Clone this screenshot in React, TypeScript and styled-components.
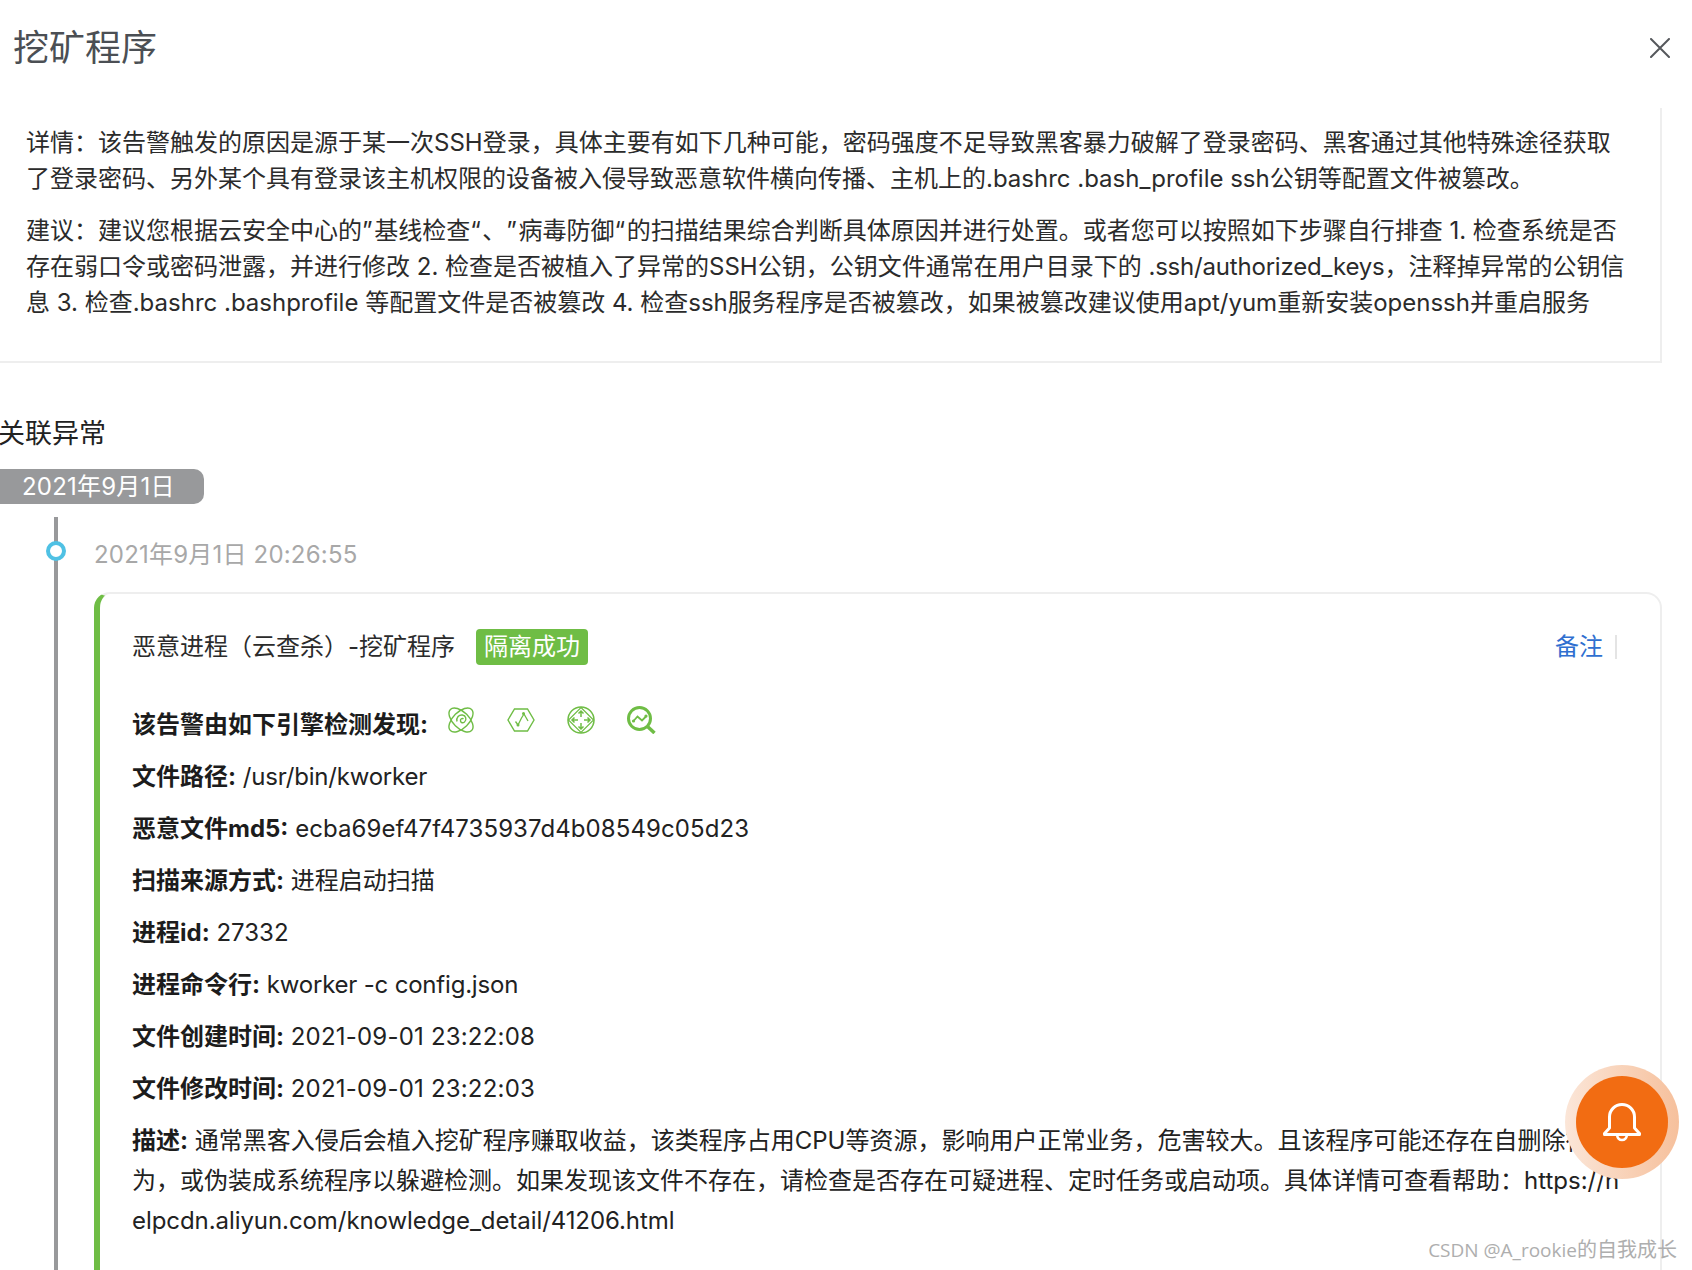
import React from "react";
import styled, { createGlobalStyle } from "styled-components";

const Global = createGlobalStyle`
  html, body { margin: 0; padding: 0; background: #fff; }
  body { font-family: "Inter", "Noto Sans CJK SC", sans-serif; }
`;

const Page = styled.div`
  position: relative;
  width: 1692px;
  height: 1270px;
  overflow: hidden;
  background: #fff;
  font-family: "Inter", "Noto Sans CJK SC", sans-serif;
  font-size: 24px;
  line-height: 36px;
  color: #222;
  text-spacing-trim: space-all;
`;

const Header = styled.header`
  display: flex;
  align-items: center;
  justify-content: space-between;
  height: 96px;
  padding: 0 22px 0 13px;
  margin-bottom: 12px;
`;

const Title = styled.h1`
  margin: 0;
  font-size: 36px;
  line-height: 44px;
  font-weight: 400;
  color: #4b4f54;
`;

const CloseButton = styled.button`
  display: flex;
  width: 20px;
  height: 20px;
  padding: 0;
  border: 0;
  background: none;
  color: #55585c;
`;

const DetailPanel = styled.section`
  width: 1662px;
  box-sizing: border-box;
  padding: 17px 27px 40px 26px;
  border-right: 2px solid #eeeeee;
  border-bottom: 2px solid #eeeeee;
`;

const Paragraph = styled.p`
  margin: 0 0 16px;
  color: #2b2b2b;
  white-space: nowrap;
  &:last-child { margin-bottom: 0; }
`;

const Spaced = styled.span<{ $spacing: number }>`
  letter-spacing: ${(p) => p.$spacing}px;
`;

const SectionTitle = styled.h2`
  margin: 51px 0 15px -2px;
  font-size: 27px;
  line-height: 40px;
  font-weight: 400;
  color: #222;
`;

const DatePill = styled.div`
  box-sizing: border-box;
  width: 204px;
  height: 35px;
  padding-left: 22px;
  line-height: 36px;
  color: #fff;
  background: #98999b;
  border-radius: 0 10px 10px 0;
`;

const Timeline = styled.div`
  position: relative;
  margin: 13px 0 0 54px;
  padding: 20px 0 0 36px;
  border-left: 4px solid #98999b;
  width: 1568px;
`;

const Dot = styled.span`
  position: absolute;
  left: -12px;
  top: 24px;
  box-sizing: border-box;
  width: 20px;
  height: 20px;
  border: 4px solid #4fc1e4;
  border-radius: 50%;
  background: #fff;
`;

const Time = styled.div`
  color: #a8a8a8;
  margin-bottom: 19px;
`;

const Card = styled.article`
  box-sizing: border-box;
  height: 760px;
  padding: 35px 43px 0 32px;
  border: 2px solid #eeeeee;
  border-left: 6px solid #6fbd45;
  border-radius: 16px;
`;

const CardHead = styled.div`
  display: flex;
  align-items: center;
  height: 36px;
  margin-bottom: 42px;
`;

const CardName = styled.span`
  color: #2b2b2b;
`;

const Tag = styled.span`
  margin-left: 21px;
  padding: 0 8px;
  height: 36px;
  border-radius: 4px;
  color: #fff;
  background: #6fbd45;
`;

const Remark = styled.a`
  margin-left: auto;
  padding-right: 12px;
  border-right: 2px solid #e4e4e4;
  height: 24px;
  line-height: 24px;
  color: #2f6fd0;
`;

const Row = styled.div`
  margin-bottom: 16px;
  color: #222;
  white-space: nowrap;
`;

const EngineRow = styled(Row)`
  display: flex;
  align-items: center;
`;

const Label = styled.b`
  font-weight: 700;
  color: #1c1c1c;
`;

const Engines = styled.span`
  display: flex;
  gap: 32px;
  margin: -10px 0 0 19px;
  color: #6fbd45;
`;

const Description = styled.div`
  line-height: 40px;
  margin-top: -2px;
  color: #222;
  white-space: nowrap;
`;

const BellHalo = styled.div`
  position: absolute;
  left: 1565px;
  top: 1065px;
  box-sizing: border-box;
  width: 114px;
  height: 114px;
  padding: 11px;
  border-radius: 50%;
  background: linear-gradient(90deg, #fbe6d8, #f6c09c);
`;

const Bell = styled.button`
  width: 92px;
  height: 92px;
  padding: 0;
  border: 0;
  border-radius: 50%;
  background: #f26c12;
  color: #fff;
  display: flex;
  align-items: center;
  justify-content: center;
`;

const Watermark = styled.div`
  position: absolute;
  right: 15px;
  bottom: 6px;
  font-size: 20px;
  line-height: 28px;
  font-family: "Open Sans", "Noto Sans CJK SC", sans-serif;
  color: #aeaeae;
`;

const WatermarkLatin = styled.span`
  font-size: 19px;
`;

const CloseIcon = () => (
  <svg width="20" height="20" viewBox="0 0 20 20" fill="none" stroke="currentColor" strokeWidth="2" strokeLinecap="round">
    <path d="M1 1 L19 19 M19 1 L1 19" />
  </svg>
);

const OrbitIcon = () => (
  <svg width="28" height="28" viewBox="0 0 28 28" fill="none" stroke="currentColor" strokeWidth="1.4">
    <ellipse cx="14" cy="14" rx="15" ry="8" transform="rotate(45 14 14)" />
    <ellipse cx="14" cy="14" rx="15" ry="8" transform="rotate(-45 14 14)" />
    <path d="M10 15.500c-1-4 2-7 5.500-6.500 3.500.5 4.500 5 2 7-2 1.500-4.500.5-4-2 .3-1.500 2-2 3-1" />
  </svg>
);

const HexIcon = () => (
  <svg width="28" height="28" viewBox="0 0 28 28" fill="none" stroke="currentColor" strokeWidth="1.4">
    <path d="M7.500 3h13L27 14l-6.500 11h-13L1 14z" />
    <path d="M8.500 15.500l2.500 3.500 3.500-7 2.500-4 4 7" strokeWidth="1.300" />
    <circle cx="11" cy="19" r="1.500" fill="currentColor" stroke="none" />
    <circle cx="16.500" cy="7.500" r="1.500" fill="currentColor" stroke="none" />
  </svg>
);

const RadarIcon = () => (
  <svg width="28" height="28" viewBox="0 0 28 28" fill="none" stroke="currentColor" strokeWidth="1.500">
    <circle cx="14" cy="14" r="13" />
    <path d="M14 1.500L26.500 14 14 26.500 1.500 14z" strokeWidth="1.200" />
    <path d="M14 5v6M11.500 7.500L14 5l2.500 2.500M14 23v-6M11.500 20.500L14 23l2.500-2.500M5 14h6M7.500 11.500L5 14l2.500 2.500M23 14h-6M20.500 11.500L23 14l-2.500 2.500" />
  </svg>
);

const SearchChartIcon = () => (
  <svg width="29" height="28" viewBox="0 0 29 28" fill="none" stroke="currentColor">
    <circle cx="12.500" cy="12.500" r="11" strokeWidth="3" />
    <path d="M20.500 20.500L27.500 27" strokeWidth="3.500" />
    <path d="M6.500 15l4-4.500 4.500 4 4.500-4.500" strokeWidth="1.800" />
    <circle cx="6.500" cy="15" r="1.600" fill="currentColor" stroke="none" />
    <circle cx="19" cy="10" r="1.600" fill="currentColor" stroke="none" />
  </svg>
);

const BellIcon = () => (
  <svg width="40" height="40" viewBox="0 0 40 40" fill="none" stroke="currentColor" strokeWidth="3" strokeLinejoin="round" strokeLinecap="round">
    <path d="M7.500 26V15a12.500 12.500 0 0 1 25 0v11l5 5.500v1H2.500v-1z" />
    <path d="M15 33c.500 3 2.500 5 5 5s4.500-2 5-5" strokeWidth="2.500" />
  </svg>
);

const rows: [string, React.ReactNode][] = [
  ["文件路径:", <Spaced $spacing={-0.2}>/usr/bin/kworker</Spaced>],
  ["恶意文件md5:", <Spaced $spacing={0.08}>ecba69ef47f4735937d4b08549c05d23</Spaced>],
  ["扫描来源方式:", "进程启动扫描"],
  ["进程id:", "27332"],
  ["进程命令行:", <Spaced $spacing={-0.2}>kworker -c config.json</Spaced>],
  ["文件创建时间:", <Spaced $spacing={0.2}>2021-09-01 23:22:08</Spaced>],
  ["文件修改时间:", <Spaced $spacing={0.2}>2021-09-01 23:22:03</Spaced>],
];

export default function App() {
  return (
    <Page>
      <Global />
      <Header>
        <Title>挖矿程序</Title>
        <CloseButton aria-label="关闭"><CloseIcon /></CloseButton>
      </Header>
      <DetailPanel>
        <Paragraph>
          详情：该告警触发的原因是源于某一次SSH登录，具体主要有如下几种可能，密码强度不足导致黑客暴力破解了登录密码、黑客通过其他特殊途径获取<br />
          了登录密码、另外某个具有登录该主机权限的设备被入侵导致恶意软件横向传播、主机上的.bashrc .bash_profile ssh公钥等配置文件被篡改。
        </Paragraph>
        <Paragraph>
          建议：建议您根据云安全中心的<Spaced $spacing={1.6}>”</Spaced>基线检查<Spaced $spacing={1.6}>“</Spaced>、<Spaced $spacing={1.6}>”</Spaced>病毒防御<Spaced $spacing={1.6}>“</Spaced>的扫描结果综合判断具体原因并进行处置。或者您可以按照如下步骤自行排查 1. 检查系统是否<br />
          存在弱口令或密码泄露，并进行修改 2. 检查是否被植入了异常的SSH公钥，公钥文件通常在用户目录下的 <Spaced $spacing={-0.2}>.ssh/authorized_keys</Spaced>，注释掉异常的公钥信<br />
          息 3. 检查.bashrc .bashprofile 等配置文件是否被篡改 4. 检查ssh服务程序是否被篡改，如果被篡改建议使用apt/yum重新安装openssh并重启服务
        </Paragraph>
      </DetailPanel>
      <SectionTitle>关联异常</SectionTitle>
      <DatePill><Spaced $spacing={0.2}>2021年9月1日</Spaced></DatePill>
      <Timeline>
        <Dot />
        <Time><Spaced $spacing={0.2}>2021年9月1日 20:26:55</Spaced></Time>
        <Card>
          <CardHead>
            <CardName>恶意进程（云查杀）-挖矿程序</CardName>
            <Tag>隔离成功</Tag>
            <Remark>备注</Remark>
          </CardHead>
          <EngineRow>
            <Label>该告警由如下引擎检测发现:</Label>
            <Engines>
              <OrbitIcon />
              <HexIcon />
              <RadarIcon />
              <SearchChartIcon />
            </Engines>
          </EngineRow>
          {rows.map(([label, value]) => (
            <Row key={label}>
              <Label>{label}</Label> {value}
            </Row>
          ))}
          <Description>
            <Label>描述:</Label> 通常黑客入侵后会植入挖矿程序赚取收益，该类程序占用CPU等资源，影响用户正常业务，危害较大。且该程序可能还存在自删除行<br />
            为，或伪装成系统程序以躲避检测。如果发现该文件不存在，请检查是否存在可疑进程、定时任务或启动项。具体详情可查看帮助：https://h<br />
            <Spaced $spacing={-0.07}>elpcdn.aliyun.com/knowledge_detail/41206.html</Spaced>
          </Description>
        </Card>
      </Timeline>
      <BellHalo>
        <Bell aria-label="通知"><BellIcon /></Bell>
      </BellHalo>
      <Watermark><WatermarkLatin>CSDN @A_rookie</WatermarkLatin>的自我成长</Watermark>
    </Page>
  );
}
